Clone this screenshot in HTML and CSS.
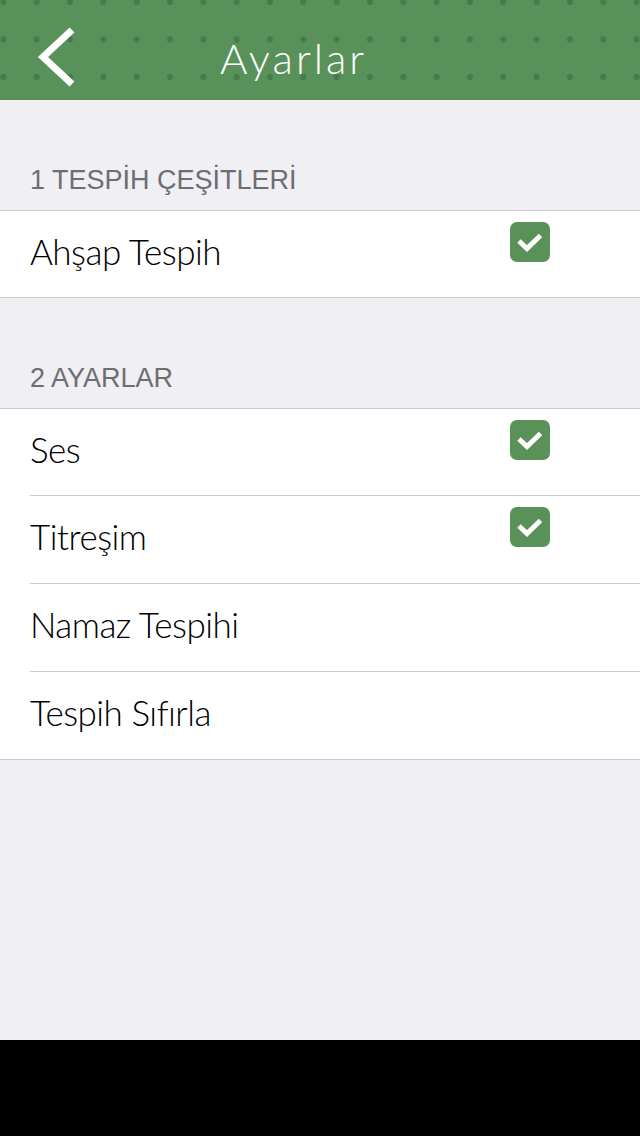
FILE: index.html
```html
<!DOCTYPE html>
<html lang="tr">
<head>
<meta charset="utf-8">
<title>Ayarlar</title>
<link rel="stylesheet" href="styles.css">
</head>
<body>
<div class="screen">
  <header class="nav">
    <svg class="back" width="44" height="64" viewBox="0 0 44 64" aria-hidden="true">
      <path d="M37 5 L8 32 L37 59" fill="none" stroke="#ffffff" stroke-width="7" stroke-linejoin="miter" stroke-linecap="butt"/>
    </svg>
    <h1 class="title">Ayarlar</h1>
  </header>

  <main class="content">
    <section class="group">
      <h2 class="group-title">1 TESPİH ÇEŞİTLERİ</h2>
      <ul class="cells">
        <li class="cell">
          <div class="cell-inner">
            <span class="label">Ahşap Tespih</span>
            <svg class="check" width="40" height="40" viewBox="0 0 40 40" aria-hidden="true">
              <rect x="0" y="0" width="40" height="40" rx="7" fill="#5a9158"/>
              <path d="M9 19 L17 26.5 L30.5 13.5" fill="none" stroke="#ffffff" stroke-width="5"/>
            </svg>
          </div>
        </li>
      </ul>
    </section>

    <section class="group">
      <h2 class="group-title">2 AYARLAR</h2>
      <ul class="cells">
        <li class="cell">
          <div class="cell-inner">
            <span class="label">Ses</span>
            <svg class="check" width="40" height="40" viewBox="0 0 40 40" aria-hidden="true">
              <rect x="0" y="0" width="40" height="40" rx="7" fill="#5a9158"/>
              <path d="M9 19 L17 26.5 L30.5 13.5" fill="none" stroke="#ffffff" stroke-width="5"/>
            </svg>
          </div>
        </li>
        <li class="cell">
          <div class="cell-inner">
            <span class="label">Titreşim</span>
            <svg class="check" width="40" height="40" viewBox="0 0 40 40" aria-hidden="true">
              <rect x="0" y="0" width="40" height="40" rx="7" fill="#5a9158"/>
              <path d="M9 19 L17 26.5 L30.5 13.5" fill="none" stroke="#ffffff" stroke-width="5"/>
            </svg>
          </div>
        </li>
        <li class="cell">
          <div class="cell-inner">
            <span class="label">Namaz Tespihi</span>
          </div>
        </li>
        <li class="cell">
          <div class="cell-inner">
            <span class="label">Tespih Sıfırla</span>
          </div>
        </li>
      </ul>
    </section>
  </main>
</div>
<div class="home-area"></div>
</body>
</html>
```

FILE: styles.css
```css
* {
  box-sizing: border-box;
}

html, body {
  margin: 0;
  padding: 0;
}

body {
  width: 640px;
  height: 1136px;
  overflow: hidden;
  background: #000000;
  font-family: "Lato", "Liberation Sans", sans-serif;
}

.screen {
  height: 1040px;
  background: #efeff4;
  display: flex;
  flex-direction: column;
}

.nav {
  height: 100px;
  flex: 0 0 auto;
  display: flex;
  align-items: flex-start;
  padding-left: 35px;
  background-color: #58925a;
  background-image: radial-gradient(ellipse 3.2px 3.6px at center, #467b4a 0, #467b4a 85%, rgba(70, 123, 74, 0) 100%);
  background-size: 33.333px 37.5px;
  background-position: -13.3px -16.75px;
}

.back {
  display: block;
  margin-top: 25px;
}

.title {
  margin: 34px 0 0 141px;
  font-weight: 300;
  font-size: 42px;
  letter-spacing: 3px;
  color: #ffffff;
  line-height: 48px;
}

.content {
  flex: 1 1 auto;
}

.group-title {
  margin: 0;
  height: 110px;
  display: flex;
  align-items: flex-end;
  padding: 0 0 15px 30px;
  font-family: "Liberation Sans", Arial, sans-serif;
  font-weight: 400;
  font-size: 27px;
  line-height: 30px;
  color: #6d6d72;
}

.cells {
  list-style: none;
  margin: 0;
  padding: 0;
  background: #ffffff;
  border-top: 1px solid #c8c7cc;
  border-bottom: 1px solid #c8c7cc;
}

.cell {
  padding-left: 30px;
}

.cell-inner {
  height: 88px;
  display: flex;
  align-items: flex-start;
  justify-content: space-between;
  border-bottom: 1px solid #c8c7cc;
  padding-right: 90px;
}

.cell:first-child .cell-inner {
  height: 87px;
}

.cell:last-child .cell-inner {
  border-bottom: none;
  height: 87px;
}

.cell:first-child:last-child .cell-inner {
  height: 86px;
}

.label {
  font-weight: 300;
  font-size: 35px;
  line-height: 40px;
  letter-spacing: -0.5px;
  color: #000000;
  margin-top: 20px;
}

.check {
  display: block;
  margin-top: 11px;
}

.home-area {
  height: 96px;
  background: #000000;
}
```
